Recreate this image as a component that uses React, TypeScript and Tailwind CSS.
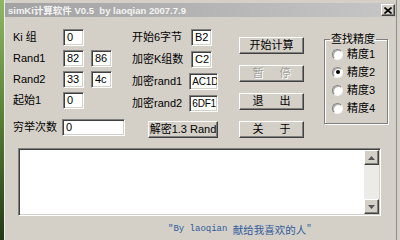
import React from "react";

const sunken =
  "border border-t-[#808080] border-l-[#808080] border-b-white border-r-white shadow-[inset_1px_1px_0_#404040,inset_-1px_-1px_0_#d4d0c8]";
const raised =
  "border border-t-white border-l-white border-r-[#404040] border-b-[#404040] shadow-[inset_-1px_-1px_0_#808080]";

function Input({ value, w = "w-[21px]", cls = "" }: { value: string; w?: string; cls?: string }) {
  return (
    <div className={`${w} h-[17px] bg-white ${sunken} flex items-center pl-[3px] overflow-hidden whitespace-nowrap text-black ${cls}`}>
      {value}
    </div>
  );
}

function Btn({ children, cls = "", disabled = false }: { children: React.ReactNode; cls?: string; disabled?: boolean }) {
  return (
    <div
      className={`h-[17px] bg-[#d4d0c8] ${raised} flex items-center justify-center ${
        disabled ? "text-[#a09e99] [text-shadow:1px_1px_0_#ffffff]" : "text-black"
      } ${cls}`}
    >
      {children}
    </div>
  );
}

function Radio({ label, checked = false }: { label: string; checked?: boolean }) {
  return (
    <div className="h-[18px] flex items-center ml-[2px]">
      <div className="w-[11px] h-[11px] rounded-full bg-white border border-t-[#808080] border-l-[#808080] border-b-[#f4f4f4] border-r-[#f4f4f4] shadow-[inset_1px_1px_0_#b0b0b0] flex items-center justify-center">
        {checked && <div className="w-[4px] h-[4px] rounded-full bg-black" />}
      </div>
      <span className="ml-[4px]">{label}</span>
    </div>
  );
}

function Arrow({ up }: { up: boolean }) {
  return (
    <div className={`h-[15px] bg-[#d4d0c8] ${raised} flex items-center justify-center`}>
      <svg width="7" height="4" viewBox="0 0 7 4">
        {up ? <polygon points="3.5,0 7,4 0,4" fill="#555" /> : <polygon points="0,0 7,0 3.5,4" fill="#555" />}
      </svg>
    </div>
  );
}

export default function App() {
  return (
    <div className="w-[400px] h-[240px] flex overflow-hidden font-['Liberation_Sans','Noto_Sans_CJK_SC',sans-serif] text-[11px] leading-[13px] text-black">
      <div className="w-[4px] h-full bg-gradient-to-b from-[#8fb864] via-[#557f34] to-[#243a18]" />
      <div className="flex-1 flex bg-[#d4d0c8]">
        <div className="flex-1 flex flex-col border-l border-l-[#eeeeee] pt-[3px]">
          {/* title bar */}
          <div className="h-[14px] flex items-center bg-gradient-to-r from-[#a2a2a2] to-[#c6c6c6] pl-[3px] pr-[1px]">
            <span className="font-bold text-[9.5px] text-[#f4f4f4] whitespace-nowrap">
              simKi计算软件 V0.5&nbsp;&nbsp;by laoqian 2007.7.9
            </span>
            <div className="flex-1" />
            <div className={`w-[14px] h-[12px] bg-[#d4d0c8] ${raised} flex items-center justify-center`}>
              <svg width="8" height="7" viewBox="0 0 8 7">
                <path d="M0.5 0.5 L7.5 6.5 M7.5 0.5 L0.5 6.5" stroke="#000" strokeWidth="1.6" />
              </svg>
            </div>
          </div>

          {/* main row */}
          <div className="flex items-start pt-[12px] pl-[8px]">
            {/* left column */}
            <div className="w-[112px] flex flex-col gap-[4px]">
              <div className="h-[17px] flex items-center">
                <span className="w-[50px]">Ki 组</span>
                <Input value="0" />
              </div>
              <div className="h-[17px] flex items-center">
                <span className="w-[50px]">Rand1</span>
                <Input value="82" />
                <div className="ml-[7px]">
                  <Input value="86" />
                </div>
              </div>
              <div className="h-[17px] flex items-center">
                <span className="w-[50px]">Rand2</span>
                <Input value="33" />
                <div className="ml-[7px]">
                  <Input value="4c" />
                </div>
              </div>
              <div className="h-[17px] flex items-center">
                <span className="w-[50px]">起始1</span>
                <Input value="0" />
              </div>
              <div className="h-[17px] flex items-center mt-[6px]">
                <span className="w-[49px] whitespace-nowrap">穷举次数</span>
                <Input value="0" w="w-[63px]" />
              </div>
            </div>

            {/* middle column */}
            <div className="ml-[7px] w-[86px] flex flex-col gap-[5px]">
              <div className="h-[17px] flex items-center">
                <span className="w-[59px] whitespace-nowrap">开始6字节</span>
                <Input value="B2" />
              </div>
              <div className="h-[17px] flex items-center">
                <span className="w-[59px] whitespace-nowrap">加密K组数</span>
                <Input value="C2" />
              </div>
              <div className="h-[17px] flex items-center">
                <span className="w-[58px] whitespace-nowrap">加密rand1</span>
                <Input value="AC1D" w="w-[29px]" cls="!pl-[2px] text-[10px] tracking-[-0.2px]" />
              </div>
              <div className="h-[17px] flex items-center">
                <span className="w-[58px] whitespace-nowrap">加密rand2</span>
                <Input value="6DF1" w="w-[29px]" cls="!pl-[2px] text-[10px] tracking-[-0.2px]" />
              </div>
              <div className="mt-[4px] ml-[16px]">
                <Btn cls="w-[70px]">解密1.3 Rand</Btn>
              </div>
            </div>

            {/* buttons column */}
            <div className="ml-[21px] pt-[8px] w-[65px] flex flex-col gap-[11px]">
              <Btn>开始计算</Btn>
              <Btn disabled>
                <span>暂</span>
                <span className="ml-[16px]">停</span>
              </Btn>
              <Btn>
                <span>退</span>
                <span className="ml-[16px]">出</span>
              </Btn>
              <Btn>
                <span>关</span>
                <span className="ml-[16px]">于</span>
              </Btn>
            </div>

            {/* group box */}
            <fieldset className="ml-[20px] mt-[4px] w-[64px] h-[91px] border border-[#808080] shadow-[1px_1px_0_#ffffff,inset_1px_1px_0_#ffffff] px-[5px] pt-0">
              <legend className="px-[1px] whitespace-nowrap">查找精度</legend>
              <div className="-mt-[1px] flex flex-col">
                <Radio label="精度1" />
                <Radio label="精度2" checked />
                <Radio label="精度3" />
                <Radio label="精度4" />
              </div>
            </fieldset>
          </div>

          {/* textarea */}
          <div className={`mt-[10px] ml-[13px] w-[363px] h-[68px] bg-white ${sunken} p-[1px] flex`}>
            <div className="flex-1 bg-white" />
            <div className="w-[15px] flex flex-col bg-[#ecebe8]">
              <Arrow up />
              <div className="flex-1" />
              <Arrow up={false} />
            </div>
          </div>

          {/* footer */}
          <div className="mt-[7px] pl-[163px] flex items-center whitespace-nowrap text-[#2f5c9c]">
            <span className="font-['Liberation_Mono',monospace] text-[9px]">"By laoqian&nbsp;</span>
            <span className="font-['Noto_Sans_CJK_SC',sans-serif] text-[10.5px]">献给我喜欢的人</span>
            <span className="font-['Liberation_Mono',monospace] text-[9px]">"</span>
          </div>
        </div>
        <div className="w-[1px] h-full bg-[#8e8e8e]" />
        <div className="w-[3px] h-full bg-[#d4d0c8]" />
      </div>
    </div>
  );
}
